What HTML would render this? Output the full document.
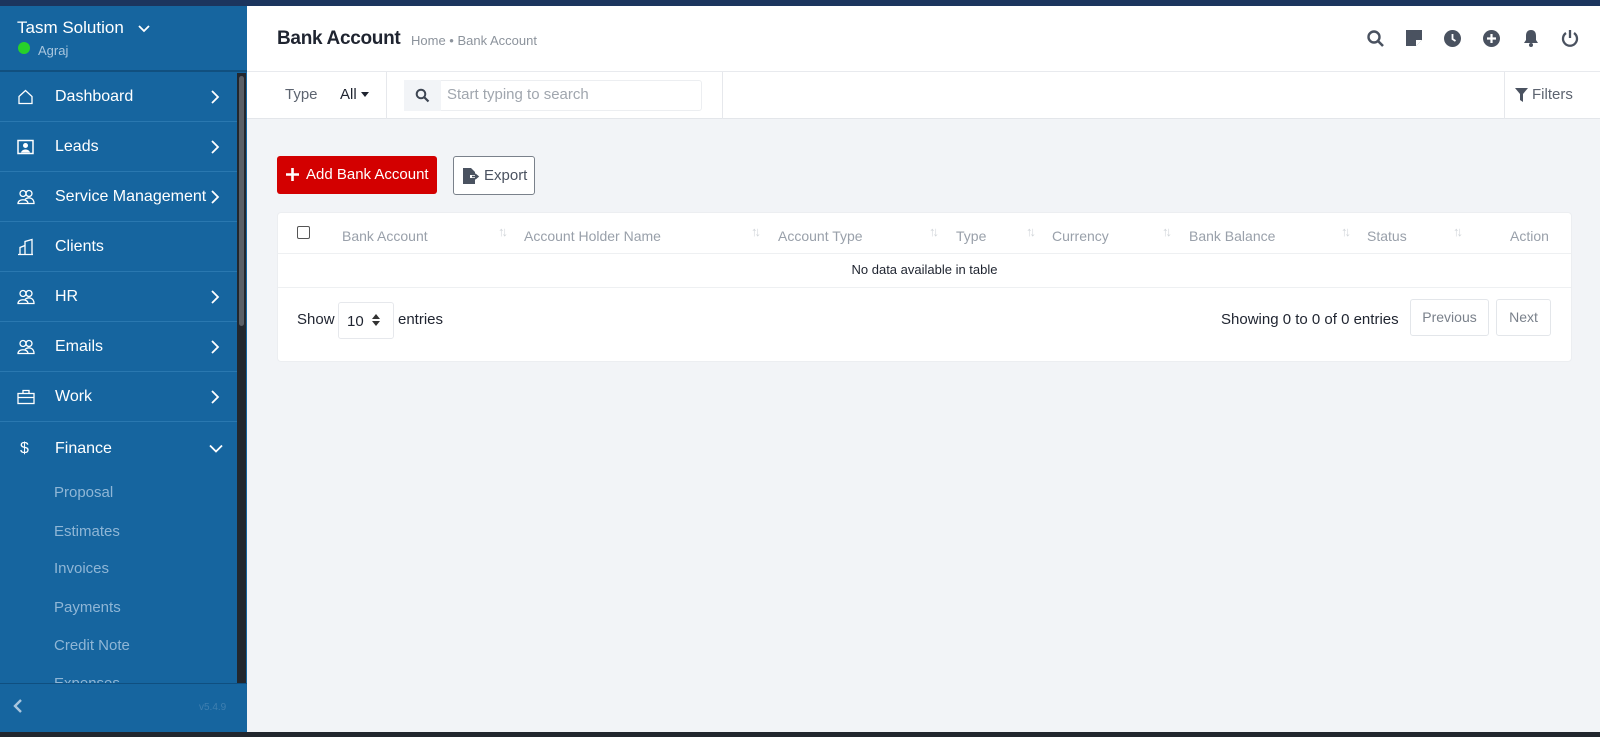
<!DOCTYPE html>
<html><head><meta charset="utf-8"><style>
*{box-sizing:border-box;margin:0;padding:0}
body{width:1600px;height:737px;overflow:hidden;background:#f2f4f7;font-family:"Liberation Sans",sans-serif;position:relative}
.abs{position:absolute;white-space:nowrap}
#top{left:0;top:0;width:1600px;height:6px;background:#1c355e}
#side{left:0;top:6px;width:247px;height:726px;background:#16659f}
#bot{left:0;top:732px;width:1600px;height:5px;background:#22272e}
.item{position:absolute;left:0;width:237px;height:50px;border-bottom:1px solid #2a78b0;color:#fff;font-size:16px;white-space:nowrap}
.item span{position:absolute;left:55px;top:50%;transform:translateY(-50%)}
.item svg{position:absolute;top:50%;transform:translateY(-50%)}
.sub{position:absolute;left:54px;color:#8fb6d6;font-size:15px;white-space:nowrap}
#header{left:247px;top:6px;width:1353px;height:66px;background:#fff;border-bottom:1px solid #e8eaee}
#fbar{left:247px;top:72px;width:1353px;height:47px;background:#fff;border-bottom:1px solid #e3e6ea}
.th{position:absolute;top:228px;color:#99a0aa;font-size:14px;white-space:nowrap}
.ar{position:absolute;top:224px;color:#d0d4d9;font-size:13px;letter-spacing:-3px}
</style></head><body>
<div id="top" class="abs"></div>
<div id="side" class="abs">
  <div class="abs" style="left:0;top:0;width:247px;height:66px;border-bottom:2px solid #11507f"></div>
  <div class="abs" style="left:17px;top:12px;color:#fff;font-size:17px">Tasm Solution</div>
  <svg class="abs" style="left:138px;top:18px" width="12" height="10" viewBox="0 0 12 10"><path d="M1 2l5 5 5-5" stroke="#fff" stroke-width="1.8" fill="none"/></svg>
  <div class="abs" style="left:18px;top:36px;width:12px;height:12px;border-radius:50%;background:#27d12a"></div>
  <div class="abs" style="left:38px;top:37px;color:#a9c6de;font-size:13px">Agraj</div>
  <div class="abs" style="left:237px;top:67px;width:9px;height:616px;background:#22272e"></div>
  <div class="abs" style="left:239px;top:70px;width:5px;height:250px;background:#5a5f66;border-radius:3px"></div>
  <div class="abs" style="left:0;top:677px;width:247px;height:49px;background:#16659f;border-top:1px solid #0f4f80"></div>
  <svg class="abs" style="left:13px;top:693px" width="10" height="14" viewBox="0 0 10 14"><path d="M8 1L2 7l6 6" stroke="#a9c6de" stroke-width="2.4" fill="none"/></svg>
  <div class="abs" style="left:199px;top:696px;color:#3f7fb0;font-size:10px">v5.4.9</div>
</div>
<div class="abs" style="left:0;top:0">
  <div class="item" style="top:72px"><svg style="left:17px" width="17" height="17" viewBox="0 0 17 17"><path d="M2 8L8.5 2 15 8v7H2z" stroke="#fff" stroke-width="1.3" fill="none"/></svg><span>Dashboard</span><svg style="left:211px" width="9" height="14" viewBox="0 0 9 14"><path d="M1 1l6 6-6 6" stroke="#fff" stroke-width="1.8" fill="none"/></svg></div>
  <div class="item" style="top:122px"><svg style="left:17px" width="17" height="15" viewBox="0 0 17 15"><rect x="1" y="1" width="15" height="13" stroke="#fff" stroke-width="1.5" fill="none"/><circle cx="8.5" cy="6" r="2.5" fill="#fff"/><path d="M4 13c1-4 8-4 9 0z" fill="#fff"/></svg><span>Leads</span><svg style="left:211px" width="9" height="14" viewBox="0 0 9 14"><path d="M1 1l6 6-6 6" stroke="#fff" stroke-width="1.8" fill="none"/></svg></div>
  <div class="item" style="top:172px"><svg style="left:17px" width="18" height="15" viewBox="0 0 18 15"><circle cx="6" cy="4" r="3" stroke="#fff" fill="none" stroke-width="1.3"/><circle cx="12" cy="4" r="3" stroke="#fff" fill="none" stroke-width="1.3"/><path d="M1 14c0-5 10-5 10 0zM8 10c3-3 9-2 9 4h-6" stroke="#fff" fill="none" stroke-width="1.3"/></svg><span>Service Management</span><svg style="left:211px" width="9" height="14" viewBox="0 0 9 14"><path d="M1 1l6 6-6 6" stroke="#fff" stroke-width="1.8" fill="none"/></svg></div>
  <div class="item" style="top:222px"><svg style="left:17px" width="17" height="17" viewBox="0 0 17 17"><path d="M1 16h15M3 16V9l5-2v9M8 16V3l7-2v15" stroke="#fff" fill="none" stroke-width="1.3"/></svg><span>Clients</span></div>
  <div class="item" style="top:272px"><svg style="left:17px" width="18" height="15" viewBox="0 0 18 15"><circle cx="6" cy="4" r="3" stroke="#fff" fill="none" stroke-width="1.3"/><circle cx="12" cy="4" r="3" stroke="#fff" fill="none" stroke-width="1.3"/><path d="M1 14c0-5 10-5 10 0zM8 10c3-3 9-2 9 4h-6" stroke="#fff" fill="none" stroke-width="1.3"/></svg><span>HR</span><svg style="left:211px" width="9" height="14" viewBox="0 0 9 14"><path d="M1 1l6 6-6 6" stroke="#fff" stroke-width="1.8" fill="none"/></svg></div>
  <div class="item" style="top:322px"><svg style="left:17px" width="18" height="15" viewBox="0 0 18 15"><circle cx="6" cy="4" r="3" stroke="#fff" fill="none" stroke-width="1.3"/><circle cx="12" cy="4" r="3" stroke="#fff" fill="none" stroke-width="1.3"/><path d="M1 14c0-5 10-5 10 0zM8 10c3-3 9-2 9 4h-6" stroke="#fff" fill="none" stroke-width="1.3"/></svg><span>Emails</span><svg style="left:211px" width="9" height="14" viewBox="0 0 9 14"><path d="M1 1l6 6-6 6" stroke="#fff" stroke-width="1.8" fill="none"/></svg></div>
  <div class="item" style="top:372px"><svg style="left:17px" width="18" height="15" viewBox="0 0 18 15"><rect x="1" y="4" width="16" height="10" stroke="#fff" fill="none" stroke-width="1.3"/><path d="M6 4V1h6v3M1 8h16" stroke="#fff" fill="none" stroke-width="1.3"/></svg><span>Work</span><svg style="left:211px" width="9" height="14" viewBox="0 0 9 14"><path d="M1 1l6 6-6 6" stroke="#fff" stroke-width="1.8" fill="none"/></svg></div>
  <div class="item" style="top:424px;border:none"><div class="abs" style="left:20px;top:16px;font-size:16px">$</div><span>Finance</span><svg style="left:209px" width="14" height="9" viewBox="0 0 14 9"><path d="M1 1l6 6 6-6" stroke="#fff" stroke-width="1.8" fill="none"/></svg></div>
  <div class="sub" style="top:484px">Proposal</div>
  <div class="sub" style="top:523px">Estimates</div>
  <div class="sub" style="top:560px">Invoices</div>
  <div class="sub" style="top:599px">Payments</div>
  <div class="sub" style="top:637px">Credit Note</div>
  <div class="sub" style="top:675px;height:8px;overflow:hidden">Expenses</div>
</div>
<div id="header" class="abs">
  <div class="abs" style="left:30px;top:22px;font-size:19px;color:#1f2430;font-weight:bold;letter-spacing:-0.3px">Bank Account</div>
  <div class="abs" style="left:164px;top:27px;font-size:13px;color:#8c939c">Home • Bank Account</div>
</div>
<svg class="abs" style="left:1366px;top:29px" width="20" height="20" viewBox="0 0 20 20"><circle cx="8" cy="8" r="5.5" stroke="#4a5260" stroke-width="2.4" fill="none"/><path d="M12 12l5 5" stroke="#4a5260" stroke-width="2.6"/></svg>
<svg class="abs" style="left:1406px;top:30px" width="16" height="16" viewBox="0 0 16 16"><path d="M0 0h16v10l-6 6H0z" fill="#4a5260"/><path d="M10 16v-6h6" fill="#fff"/></svg>
<svg class="abs" style="left:1444px;top:30px" width="17" height="17" viewBox="0 0 17 17"><circle cx="8.5" cy="8.5" r="8.5" fill="#4a5260"/><path d="M8.5 4v5l3 2" stroke="#fff" stroke-width="1.8" fill="none"/></svg>
<svg class="abs" style="left:1483px;top:30px" width="17" height="17" viewBox="0 0 17 17"><circle cx="8.5" cy="8.5" r="8.5" fill="#4a5260"/><path d="M8.5 4v9M4 8.5h9" stroke="#fff" stroke-width="2.2"/></svg>
<svg class="abs" style="left:1523px;top:29px" width="16" height="18" viewBox="0 0 16 18"><path d="M8 1c4 0 5 3 5 6v4l2 3H1l2-3V7c0-3 1-6 5-6z" fill="#4a5260"/><circle cx="8" cy="16" r="2" fill="#4a5260"/></svg>
<svg class="abs" style="left:1561px;top:29px" width="18" height="18" viewBox="0 0 18 18"><path d="M5 4a7 7 0 1 0 8 0" stroke="#4a5260" stroke-width="2.3" fill="none"/><path d="M9 1v8" stroke="#4a5260" stroke-width="2.3"/></svg>
<div id="fbar" class="abs">
  <div class="abs" style="left:38px;top:14px;font-size:15px;color:#5d6470">Type</div>
  <div class="abs" style="left:93px;top:14px;font-size:15px;color:#1f2430">All</div>
  <svg class="abs" style="left:114px;top:20px" width="8" height="5"><path d="M0 0h8L4 5z" fill="#1f2430"/></svg>
  <div class="abs" style="left:139px;top:0;width:1px;height:47px;background:#e6e8ec"></div>
  <div class="abs" style="left:157px;top:8px;width:298px;height:31px;border:1px solid #eceef1;border-radius:3px;background:#fff"></div>
  <div class="abs" style="left:157px;top:8px;width:37px;height:31px;background:#f2f4f7"></div>
  <svg class="abs" style="left:168px;top:16px" width="15" height="15" viewBox="0 0 15 15"><circle cx="6" cy="6" r="4.3" stroke="#3e4653" stroke-width="2" fill="none"/><path d="M9 9l4.5 4.5" stroke="#3e4653" stroke-width="2.2"/></svg>
  <div class="abs" style="left:200px;top:14px;font-size:15px;color:#a0a6ae">Start typing to search</div>
  <div class="abs" style="left:475px;top:0;width:1px;height:47px;background:#e6e8ec"></div>
  <div class="abs" style="left:1257px;top:0;width:1px;height:47px;background:#e6e8ec"></div>
  <svg class="abs" style="left:1268px;top:16px" width="13" height="14" viewBox="0 0 13 14"><path d="M0 0h13L8 6v8L5 12V6z" fill="#4a5260"/></svg>
  <div class="abs" style="left:1285px;top:14px;font-size:15px;color:#5d6470">Filters</div>
</div>
<div class="abs" style="left:277px;top:156px;width:160px;height:38px;background:#d30000;border-radius:3px;color:#fff;font-size:15px">
  <svg class="abs" style="left:9px;top:12px" width="13" height="13"><path d="M6.5 0v13M0 6.5h13" stroke="#fff" stroke-width="2.6"/></svg>
  <div class="abs" style="left:29px;top:10px">Add Bank Account</div>
</div>
<div class="abs" style="left:453px;top:156px;width:82px;height:39px;background:#fff;border:1px solid #7a818b;border-radius:3px;color:#4a5260;font-size:15px">
  <svg class="abs" style="left:9px;top:11px" width="17" height="16" viewBox="0 0 17 16"><path d="M0 0h8l4 4v3H7v3h5v6H0z" fill="#4a5260"/><path d="M9 8.5h5M12 6l3 2.5-3 2.5" stroke="#4a5260" stroke-width="1.5" fill="#4a5260"/></svg>
  <div class="abs" style="left:30px;top:10px">Export</div>
</div>
<div class="abs" style="left:277px;top:212px;width:1295px;height:150px;background:#fff;border-radius:4px;border:1px solid #eceef1"></div>
<div class="abs" style="left:297px;top:226px;width:13px;height:13px;border:1px solid #555;border-radius:2px;background:#fff"></div>
<div class="th" style="left:342px">Bank Account</div><div class="ar" style="left:498px">↑↓</div>
<div class="th" style="left:524px">Account Holder Name</div><div class="ar" style="left:751px">↑↓</div>
<div class="th" style="left:778px">Account Type</div><div class="ar" style="left:929px">↑↓</div>
<div class="th" style="left:956px">Type</div><div class="ar" style="left:1026px">↑↓</div>
<div class="th" style="left:1052px">Currency</div><div class="ar" style="left:1162px">↑↓</div>
<div class="th" style="left:1189px">Bank Balance</div><div class="ar" style="left:1341px">↑↓</div>
<div class="th" style="left:1367px">Status</div><div class="ar" style="left:1453px">↑↓</div>
<div class="th" style="left:1510px">Action</div>
<div class="abs" style="left:278px;top:253px;width:1293px;height:1px;background:#eef0f2"></div>
<div class="abs" style="left:278px;top:262px;width:1293px;text-align:center;font-size:13px;color:#1f2430">No data available in table</div>
<div class="abs" style="left:278px;top:287px;width:1293px;height:1px;background:#eef0f2"></div>
<div class="abs" style="left:297px;top:311px;font-size:15px;color:#1f2430">Show</div>
<div class="abs" style="left:338px;top:302px;width:56px;height:37px;border:1px solid #e6e8ec;border-radius:3px;font-size:15px;color:#1f2430;padding:10px 0 0 8px">10</div>
<svg class="abs" style="left:372px;top:314px" width="8" height="12"><path d="M0 5L4 0l4 5zM0 7l4 5 4-5z" fill="#333"/></svg>
<div class="abs" style="left:398px;top:311px;font-size:15px;color:#1f2430">entries</div>
<div class="abs" style="left:1221px;top:311px;font-size:15px;color:#1f2430">Showing 0 to 0 of 0 entries</div>
<div class="abs" style="left:1410px;top:299px;width:79px;height:37px;border:1px solid #e3e6ea;border-radius:3px;font-size:14px;color:#7a818b;text-align:center;line-height:35px">Previous</div>
<div class="abs" style="left:1496px;top:299px;width:55px;height:37px;border:1px solid #e3e6ea;border-radius:3px;font-size:14px;color:#7a818b;text-align:center;line-height:35px">Next</div>
<div id="bot" class="abs"></div>
</body></html>
